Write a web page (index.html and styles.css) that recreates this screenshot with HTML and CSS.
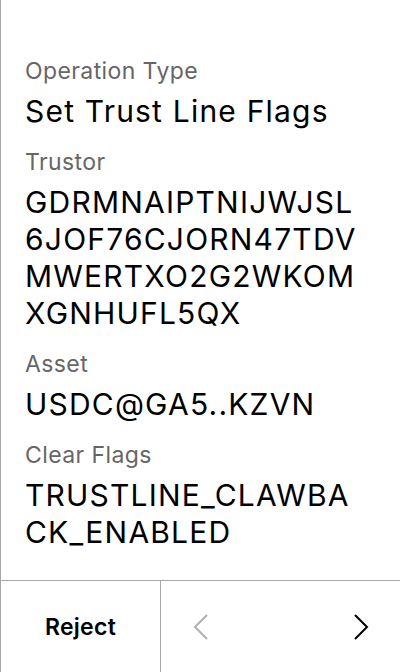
FILE: index.html
```html
<!DOCTYPE html>
<html>
<head>
<meta charset="utf-8">
<link rel="stylesheet" href="styles.css">
</head>
<body>
<div class="screen">
  <div class="content">
    <div class="field">
      <div class="label">Operation Type</div>
      <div class="value">Set Trust Line Flags</div>
    </div>
    <div class="field">
      <div class="label">Trustor</div>
      <div class="value">GDRMNAIPTNIJWJSL6JOF76CJORN47TDVMWERTXO2G2WKOMXGNHUFL5QX</div>
    </div>
    <div class="field">
      <div class="label">Asset</div>
      <div class="value">USDC@GA5..KZVN</div>
    </div>
    <div class="field">
      <div class="label">Clear Flags</div>
      <div class="value">TRUSTLINE_CLAWBACK_ENABLED</div>
    </div>
  </div>
  <div class="footer">
    <div class="reject">Reject</div>
    <div class="nav">
      <svg class="chev disabled" width="16" height="28" viewBox="0 0 16 28"><path d="M14 2 L2 14 L14 26" fill="none" stroke="currentColor" stroke-width="2"/></svg>
      <svg class="chev" width="16" height="28" viewBox="0 0 16 28"><path d="M2 2 L14 14 L2 26" fill="none" stroke="currentColor" stroke-width="2"/></svg>
    </div>
  </div>
</div>
</body>
</html>
```
FILE: styles.css
```css
html, body {
  margin: 0;
  padding: 0;
  background: #fff;
}
body {
  font-family: Inter, "Noto Sans", sans-serif;
  color: #000;
}
.screen {
  width: 400px;
  height: 672px;
  box-sizing: border-box;
  border-left: 1px solid #a8a8a8;
  display: flex;
  flex-direction: column;
}
.content {
  flex: 1;
  padding: 56px 0 0 24px;
}
.field {
  margin-bottom: 17px;
  width: 346px;
}
.label {
  font-size: 23px;
  line-height: 30px;
  letter-spacing: 0.4px;
  color: #666;
  margin-bottom: 7px;
}
.value {
  font-size: 30px;
  line-height: 37px;
  letter-spacing: 1.2px;
  word-break: break-all;
}
.footer {
  height: 92px;
  box-sizing: border-box;
  border-top: 1px solid #a8a8a8;
  display: flex;
}
.reject {
  width: 160px;
  box-sizing: border-box;
  border-right: 1px solid #a8a8a8;
  display: flex;
  align-items: center;
  justify-content: center;
  font-size: 23px;
  font-weight: 600;
  letter-spacing: 0.3px;
}
.nav {
  flex: 1;
  display: flex;
  align-items: center;
  justify-content: space-between;
  padding: 0 31px 0 32px;
}
.chev {
  color: #000;
}
.chev.disabled {
  color: #b0b0b0;
}
```
